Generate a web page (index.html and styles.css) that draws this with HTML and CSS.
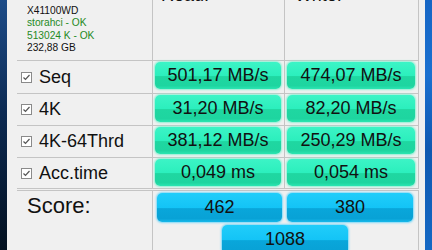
FILE: index.html
```html
<!DOCTYPE html>
<html>
  <head>
    <title>AS SSD</title>
    <link rel="stylesheet" href="styles.css">
  </head>
  <body>
    <div class="screen">
      <div class="desk desk-left"></div>
      <div class="window">
        <div class="grid">
          <div class="cell info">
            <div>X41100WD</div>
            <div class="ok">storahci - OK</div>
            <div class="ok">513024 K - OK</div>
            <div>232,88 GB</div>
          </div>
          <div class="cell head head-read">Read:</div>
          <div class="cell head head-write">Write:</div>

          <div class="cell label">
            <svg class="check" width="11" height="11" viewBox="0 0 11 11"><rect x="0.5" y="0.5" width="10" height="10" fill="#fff" stroke="#8a8a8a"/><path d="M2.5 5.5 L4.5 7.5 L8.5 3" fill="none" stroke="#555" stroke-width="1.2"/></svg>
            <span>Seq</span>
          </div>
          <div class="cell"><div class="btn green read">501,17 MB/s</div></div>
          <div class="cell"><div class="btn green write">474,07 MB/s</div></div>

          <div class="cell label">
            <svg class="check" width="11" height="11" viewBox="0 0 11 11"><rect x="0.5" y="0.5" width="10" height="10" fill="#fff" stroke="#8a8a8a"/><path d="M2.5 5.5 L4.5 7.5 L8.5 3" fill="none" stroke="#555" stroke-width="1.2"/></svg>
            <span>4K</span>
          </div>
          <div class="cell"><div class="btn green read">31,20 MB/s</div></div>
          <div class="cell"><div class="btn green write">82,20 MB/s</div></div>

          <div class="cell label">
            <svg class="check" width="11" height="11" viewBox="0 0 11 11"><rect x="0.5" y="0.5" width="10" height="10" fill="#fff" stroke="#8a8a8a"/><path d="M2.5 5.5 L4.5 7.5 L8.5 3" fill="none" stroke="#555" stroke-width="1.2"/></svg>
            <span>4K-64Thrd</span>
          </div>
          <div class="cell"><div class="btn green read">381,12 MB/s</div></div>
          <div class="cell"><div class="btn green write">250,29 MB/s</div></div>

          <div class="cell label">
            <svg class="check" width="11" height="11" viewBox="0 0 11 11"><rect x="0.5" y="0.5" width="10" height="10" fill="#fff" stroke="#8a8a8a"/><path d="M2.5 5.5 L4.5 7.5 L8.5 3" fill="none" stroke="#555" stroke-width="1.2"/></svg>
            <span>Acc.time</span>
          </div>
          <div class="cell"><div class="btn green read">0,049 ms</div></div>
          <div class="cell"><div class="btn green write">0,054 ms</div></div>
        </div>

        <div class="score">
          <div class="score-label">Score:</div>
          <div class="score-vals">
            <div class="btn blue">462</div>
            <div class="btn blue">380</div>
            <div class="btn blue total">1088</div>
          </div>
        </div>
      </div>
      <div class="desk desk-right"></div>
    </div>
  </body>
</html>
```

FILE: styles.css
```css
body {
  margin: 0;
  padding: 0;
  font-family: "Liberation Sans", Arial, sans-serif;
  color: #111;
  overflow: hidden;
}
.screen {
  display: flex;
  width: 432px;
  height: 250px;
  overflow: hidden;
}
.desk {
  width: 7px;
  flex: none;
}
.desk-left {
  background: linear-gradient(#1d4c88, #0c2a52 45%, #03101f);
}
.desk-right {
  background: linear-gradient(#1565c4, #1a70d0 30%, #0f58b0 60%, #1468c4);
}
.window {
  flex: 1;
  background: #f0f0f0;
  padding: 0 6px 0 10px;
  overflow: hidden;
}
.grid {
  display: grid;
  grid-template-columns: 136px 132px 134px;
  grid-template-rows: 81px 33px 32px 32px 31px;
  margin-top: -20px;
}
.cell {
  box-sizing: border-box;
  border-right: 1px solid #c4c4c4;
  border-bottom: 1px solid #c4c4c4;
}
.info {
  padding: 25px 0 0 10px;
  font-size: 10.2px;
  line-height: 12.3px;
}
.ok {
  color: #1f8a1f;
}
.head {
  padding-top: 4.5px;
  font-size: 18px;
  line-height: 20px;
}
.head-read {
  padding-left: 8px;
}
.head-write {
  padding-left: 10px;
}
.label {
  display: flex;
  align-items: center;
  gap: 7px;
  padding-left: 4px;
  font-size: 18px;
}
.check {
  flex: none;
}
.btn {
  box-sizing: border-box;
  height: 27px;
  line-height: 27px;
  font-size: 18px;
  text-align: center;
  border-radius: 5px;
  color: #111;
}
.green {
  margin: 1px 3px 0 2px;
  background: linear-gradient(#3cf4c6 0%, #2cefbd 50%, #1fd7a1 54%, #1ed5a0 88%, #2be6b2 100%);
  box-shadow: 0 0 2px 1px #8ff0d4;
}
.score {
  display: grid;
  grid-template-columns: 136px 266px;
  margin-top: 1px;
  border-top: 1px solid #c4c4c4;
  height: 70px;
}
.score-label {
  border-right: 1px solid #c4c4c4;
  padding: 2px 0 0 10px;
  font-size: 22px;
  line-height: 26px;
}
.score-vals {
  display: grid;
  grid-template-columns: 125px 126px;
  column-gap: 5px;
  row-gap: 3px;
  align-content: start;
  padding: 2px 0 0 4px;
  border-right: 1px solid #c4c4c4;
}
.blue {
  height: 29px;
  line-height: 29px;
  background: linear-gradient(#20cdfa 0%, #14c4f6 50%, #09a6da 54%, #08a2d6 88%, #16b8ea 100%);
  box-shadow: 0 0 2px 1px #7fd9f8;
}
.total {
  grid-column: 1 / span 2;
  justify-self: center;
  width: 126px;
}
```
